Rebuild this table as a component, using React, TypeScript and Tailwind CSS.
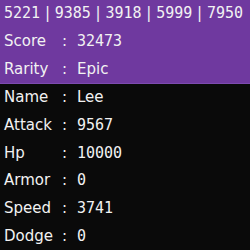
import React from "react";

const sans = { fontFamily: '"DejaVu Sans", Verdana, sans-serif' };

function Mono({ children }: { children: React.ReactNode }) {
  return <span className="font-['DejaVu_Sans_Mono',monospace]">{children}</span>;
}

function Value({ v }: { v: string }) {
  const isNum = /^\d+$/.test(v);
  return isNum ? <Mono>{v}</Mono> : <span>{v}</span>;
}

function Row({ label, value }: { label: string; value: string }) {
  return (
    <div className="flex h-[27.67px] items-center pl-[4px]">
      <span className="w-[58px]">{label}</span>
      <span className="w-[15px]">:</span>
      <Value v={value} />
    </div>
  );
}

export default function App() {
  const nums = ["5221", "9385", "3918", "5999", "7950"];
  const top = [
    ["Score", "32473"],
    ["Rarity", "Epic"],
  ];
  const stats = [
    ["Name", "Lee"],
    ["Attack", "9567"],
    ["Hp", "10000"],
    ["Armor", "0"],
    ["Speed", "3741"],
    ["Dodge", "0"],
  ];
  return (
    <div
      className="w-[250px] h-[250px] overflow-hidden bg-[#0a0a0a] text-[15px] leading-none text-[#f2f2f2]"
      style={sans}
    >
      <div className="bg-[#6f399f] border-b border-[#7d4bb0]">
        <div className="flex h-[27.67px] items-center pl-[4px] whitespace-pre">
          {nums.map((n, i) => (
            <React.Fragment key={i}>
              {i > 0 && <span>{" | "}</span>}
              <Mono>{n}</Mono>
            </React.Fragment>
          ))}
        </div>
        {top.map(([l, v]) => (
          <Row key={l} label={l} value={v} />
        ))}
      </div>
      {stats.map(([l, v]) => (
        <Row key={l} label={l} value={v} />
      ))}
    </div>
  );
}
